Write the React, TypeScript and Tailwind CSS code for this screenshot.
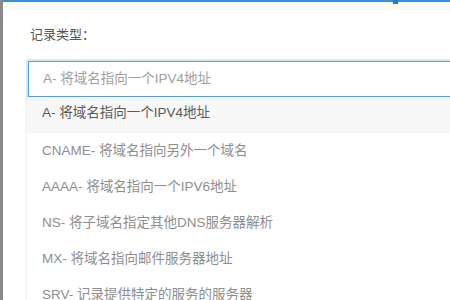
import React from 'react';

const options = [
  'A- 将域名指向一个IPV4地址',
  'CNAME- 将域名指向另外一个域名',
  'AAAA- 将域名指向一个IPV6地址',
  'NS- 将子域名指定其他DNS服务器解析',
  'MX- 将域名指向邮件服务器地址',
  'SRV- 记录提供特定的服务的服务器',
];

const App: React.FC = () => {
  return (
    <div className="w-[450px] h-[300px] overflow-hidden flex bg-white font-['Liberation_Sans','Noto_Sans_CJK_SC',sans-serif]">
      {/* left window edge */}
      <div className="w-[3px] shrink-0 bg-[#8a8a8a]" />
      <div className="flex-1 flex flex-col relative">
        {/* top blue edge */}
        <div className="h-[2px] bg-[#3a8fd6] shrink-0" />
        <div className="absolute left-[390px] top-0 w-[5px] h-[4px] bg-[#1e7fd8]" />
        <div className="h-[7px] bg-[#fbfbf6] shrink-0" />

        <div className="pl-[27px] pt-[19px] text-[13px] text-[#555] leading-none">记录类型：</div>

        <div className="pl-[25px] pt-[20px]">
          <div className="h-[36px] w-[460px] border border-[#5d9fd6] shadow-[0_0_0_2px_#d6e9f8] flex items-center pl-[14px] text-[13.5px] text-[#a0a0a0]">
            A- 将域名指向一个IPV4地址
          </div>
          <div className="w-[460px] -ml-[1px] shadow-[-1px_0_2px_rgba(0,0,0,0.08)] bg-white flex flex-col">
            {options.map((o, i) => (
              <div
                key={o}
                className={
                  i === 0
                    ? 'h-[36px] pb-[3px] flex items-center pl-[15px] text-[13.5px] text-[#5a5a5a] bg-[#f7f7f7]'
                    : 'h-[36px] flex items-center pl-[15px] text-[13.5px] text-[#8e8e8e]'
                }
              >
                {o}
              </div>
            ))}
          </div>
        </div>
      </div>
    </div>
  );
};

export default App;
